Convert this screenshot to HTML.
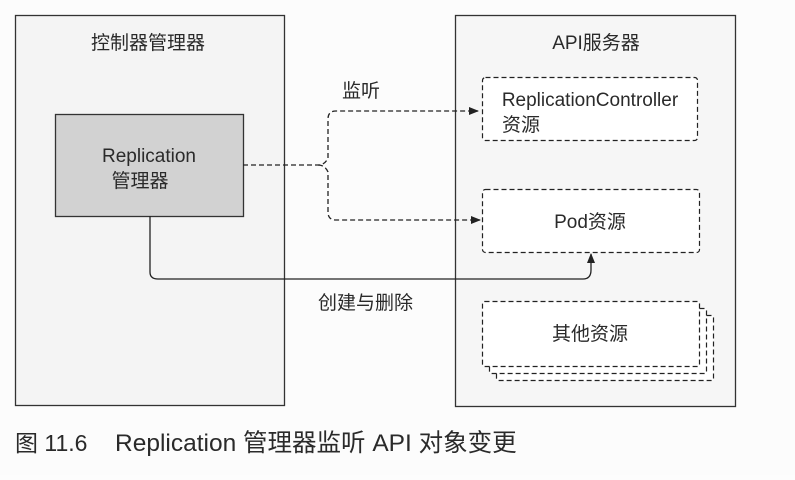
<!DOCTYPE html>
<html><head><meta charset="utf-8"><style>
body{margin:0;background:#fdfdfd;}
svg text{font-family:"Liberation Sans","Noto Sans CJK SC",sans-serif;fill:#2a2a2a;white-space:pre;}
</style></head><body>
<svg width="795" height="475" viewBox="0 0 795 475" xmlns="http://www.w3.org/2000/svg">
<defs><marker id="a" markerWidth="10" markerHeight="10" refX="9" refY="5" orient="auto" markerUnits="userSpaceOnUse"><path d="M0,1 L10,5 L0,9 Z" fill="#222"/></marker></defs>
<rect x="0" y="0" width="795" height="475" fill="#fcfcfc"/>
<rect x="15.5" y="15.5" width="269" height="390" fill="#f4f4f4" stroke="#333" stroke-width="1.3"/>
<rect x="455.5" y="15.5" width="280" height="391" fill="#f6f6f6" stroke="#333" stroke-width="1.3"/>
<text x="148" y="49" font-size="19" text-anchor="middle">控制器管理器</text>
<text x="596" y="49" font-size="19" text-anchor="middle">API服务器</text>
<rect x="55.5" y="114.5" width="188" height="102" fill="#d2d2d2" stroke="#333" stroke-width="1.3"/>
<text x="149" y="162" font-size="19" text-anchor="middle" fill="#444">Replication</text>
<text x="140" y="187" font-size="19" text-anchor="middle">管理器</text>
<g fill="#fff" stroke="#222" stroke-width="1.2" stroke-dasharray="5,3">
<rect x="482.5" y="77.5" width="215" height="63" rx="3"/>
<rect x="496.5" y="315.5" width="217" height="65" rx="2"/>
<rect x="489.5" y="308.5" width="217" height="65" rx="2"/>
<rect x="482.5" y="301.5" width="217" height="65" rx="2"/>
<rect x="482.5" y="189.5" width="217" height="63" rx="3"/>
</g>
<text x="590" y="106" font-size="19" text-anchor="middle">ReplicationController</text>
<text x="521" y="131" font-size="19" text-anchor="middle">资源</text>
<text x="590" y="228" font-size="19" text-anchor="middle">Pod资源</text>
<text x="590" y="340" font-size="19" text-anchor="middle">其他资源</text>
<text x="342" y="97" font-size="19">监听</text>
<text x="318" y="309" font-size="19">创建与删除</text>
<g fill="none" stroke="#222" stroke-width="1.3">
<path d="M243,165 H318 Q325,165 328,158 V119 Q328,111 336,111 H478" stroke-dasharray="5,3" marker-end="url(#a)"/>
<path d="M318,165 Q325,165 328,172 V212 Q328,220 336,220 H480" stroke-dasharray="5,3" marker-end="url(#a)"/>
<path d="M150,216 V272 Q150,279 158,279 H583 Q591,279 591,270 V254" marker-end="url(#a)"/>
</g>
<text x="15" y="451" font-size="23" fill="#333">图 11.6</text>
<text x="115" y="451" font-size="24.5" fill="#333">Replication 管理器监听 API 对象变更</text>
</svg>
</body></html>
